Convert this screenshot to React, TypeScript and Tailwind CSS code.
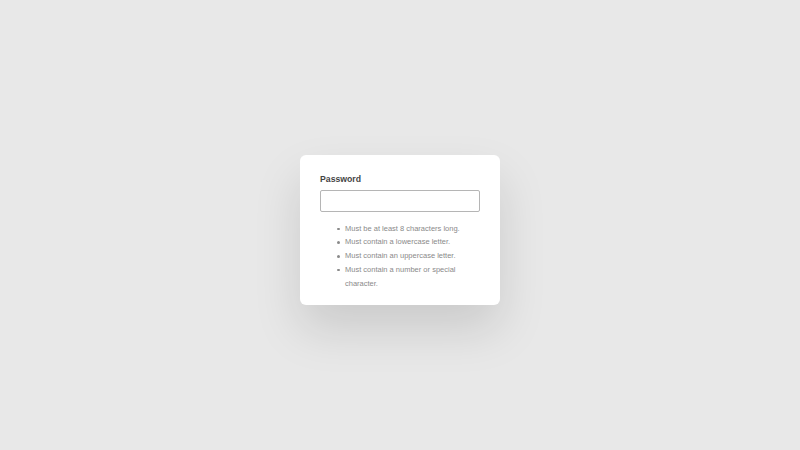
export default function App() {
  const rules = [
    "Must be at least 8 characters long.",
    "Must contain a lowercase letter.",
    "Must contain an uppercase letter.",
    "Must contain a number or special character.",
  ];

  return (
    <div className="min-h-screen w-full flex items-center justify-center pt-[10px] bg-[#e8e8e8] font-['Liberation_Sans',Arial,sans-serif]">
      <div className="w-[200px] bg-white rounded-md px-5 pt-[19px] pb-[15px] shadow-[0_24px_48px_rgba(0,0,0,0.13)]">
        <label className="block text-[8.7px] leading-[11px] font-bold text-[#444] mb-[5px]">Password</label>
        <input
          type="password"
          className="block w-full h-[22px] border border-[#b5b5b5] rounded-[2px] bg-white outline-none"
        />
        <ul className="mt-[10px] pl-[25px] text-[7.5px] leading-[13.7px] text-[#8a8a8a]">
          {rules.map((r) => (
            <li
              key={r}
              className="relative before:content-[''] before:absolute before:left-[-8px] before:top-[6px] before:w-[2.5px] before:h-[2.5px] before:rounded-full before:bg-[#8a8a8a]"
            >
              {r}
            </li>
          ))}
        </ul>
      </div>
    </div>
  );
}
